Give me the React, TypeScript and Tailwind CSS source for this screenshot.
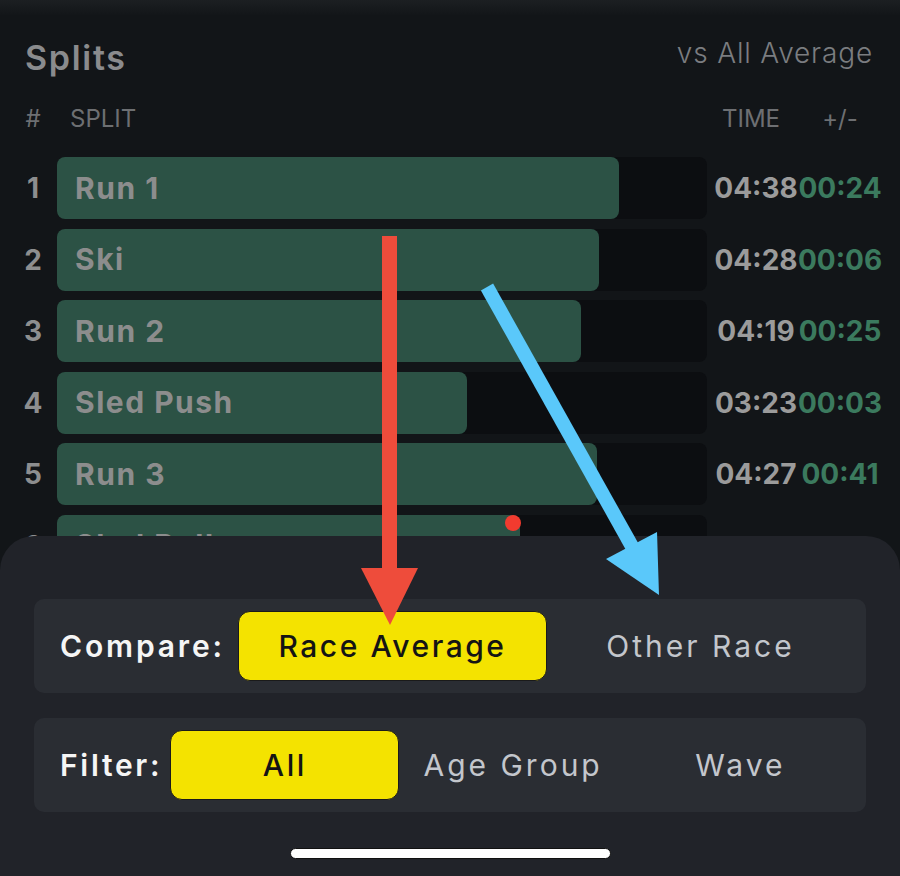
import React from "react";

const rows = [
  { n: 1, name: "Run 1", w: 562, time: "04:38", diff: "00:24" },
  { n: 2, name: "Ski", w: 542, time: "04:28", diff: "00:06" },
  { n: 3, name: "Run 2", w: 524, time: "04:19", diff: "00:25" },
  { n: 4, name: "Sled Push", w: 410, time: "03:23", diff: "00:03" },
  { n: 5, name: "Run 3", w: 540, time: "04:27", diff: "00:41" },
  { n: 6, name: "Sled Pull", w: 463, time: "", diff: "" },
];

export default function App() {
  return (
    <div className="relative w-[900px] h-[876px] overflow-hidden bg-[#121518] font-['Inter',sans-serif]">
      <div className="h-[16px] bg-gradient-to-b from-[#1c1f22] to-[#121518]" />
      <div className="px-[25px]">
        <div className="flex items-start justify-between pt-[17px]">
          <div className="mt-[5px] text-[34px] leading-[40px] font-semibold text-[#8a8b8d] tracking-[0.05em]">Splits</div>
          <div className="mr-[2px] text-[28px] leading-[40px] font-light text-[#7b7d80] tracking-[0.03em]">vs All Average</div>
        </div>
        <div className="mt-[26px] flex h-[30px] items-center text-[24px] leading-[30px] text-[#6d6f72]">
          <div className="w-[16px] text-center">#</div>
          <div className="ml-[16px] w-[650px] pl-[13px]">SPLIT</div>
          <div className="w-[98px] flex justify-center pr-[10px]">TIME</div>
          <div className="w-[70px] flex justify-center">+/-</div>
        </div>
        <div className="mt-[23px] flex flex-col gap-[9.5px]">
          {rows.map((r) => (
            <div key={r.n} className="flex h-[62px] items-center">
              <div className="w-[16px] flex justify-center text-[28px] font-bold text-[#8d8e8f]">{r.n}</div>
              <div className="ml-[16px] h-full w-[650px] rounded-[8px] bg-[#0c0e11]">
                <div
                  className="flex h-full items-center rounded-[8px] bg-[#2c5245] pl-[18px] text-[30px] font-bold text-[#8c8d8d] tracking-[0.05em] whitespace-nowrap"
                  style={{ width: r.w }}
                >
                  {r.name}
                </div>
              </div>
              <div className="w-[98px] flex justify-center whitespace-nowrap text-[28px] font-bold text-[#9b9b9b]">{r.time}</div>
              <div className="w-[70px] flex justify-center whitespace-nowrap text-[28px] font-bold text-[#3b7a5e]">{r.diff}</div>
            </div>
          ))}
        </div>
      </div>

      <div className="absolute top-[536px] inset-x-0 bottom-0 rounded-t-[34px] bg-[#212329] px-[34px] pt-[63px] flex flex-col">
        <div className="flex h-[94px] items-center rounded-[10px] bg-[#2a2d33] pl-[26px] pr-[12px] py-[12px]">
          <div className="mr-[13px] text-[30px] font-semibold text-[#f5f5f5] tracking-[0.095em]">Compare:</div>
          <div className="flex h-full flex-1">
            <div className="flex flex-1 items-center justify-center rounded-[12px] border border-[#1a1a1a] bg-[#f4e300] text-[30px] font-medium text-[#141414] tracking-[0.085em]">Race Average</div>
            <div className="flex flex-1 items-center justify-center text-[30px] text-[#c3c6cc] tracking-[0.1em]">Other Race</div>
          </div>
        </div>
        <div className="mt-[25px] flex h-[94px] items-center rounded-[10px] bg-[#2a2d33] pl-[26px] pr-[12px] py-[12px]">
          <div className="mr-[8px] text-[30px] font-semibold text-[#f5f5f5] tracking-[0.09em]">Filter:</div>
          <div className="flex h-full flex-1">
            <div className="flex flex-1 items-center justify-center rounded-[12px] border border-[#1a1a1a] bg-[#f4e300] text-[30px] font-medium text-[#141414] tracking-[0.085em]">All</div>
            <div className="flex flex-1 items-center justify-center text-[30px] text-[#c3c6cc] tracking-[0.1em]">Age Group</div>
            <div className="flex flex-1 items-center justify-center text-[30px] text-[#c3c6cc] tracking-[0.1em]">Wave</div>
          </div>
        </div>
        <div className="mt-[36px] flex justify-center">
          <div className="ml-[1px] h-[11px] w-[321px] rounded-full border border-[#111] bg-white" />
        </div>
      </div>

      <svg className="pointer-events-none absolute inset-0" width="900" height="876" viewBox="0 0 900 876">
        <circle cx="513" cy="523" r="8" fill="#f23b2f" />
        <rect x="382" y="236" width="15" height="336" fill="#ee4c3b" />
        <polygon points="361,568 418,568 390,625" fill="#ee4c3b" />
        <line x1="487" y1="287" x2="634" y2="550" stroke="#5ac8fa" strokeWidth="14" />
        <polygon points="606,559 657,532 659,595" fill="#5ac8fa" />
      </svg>
    </div>
  );
}
